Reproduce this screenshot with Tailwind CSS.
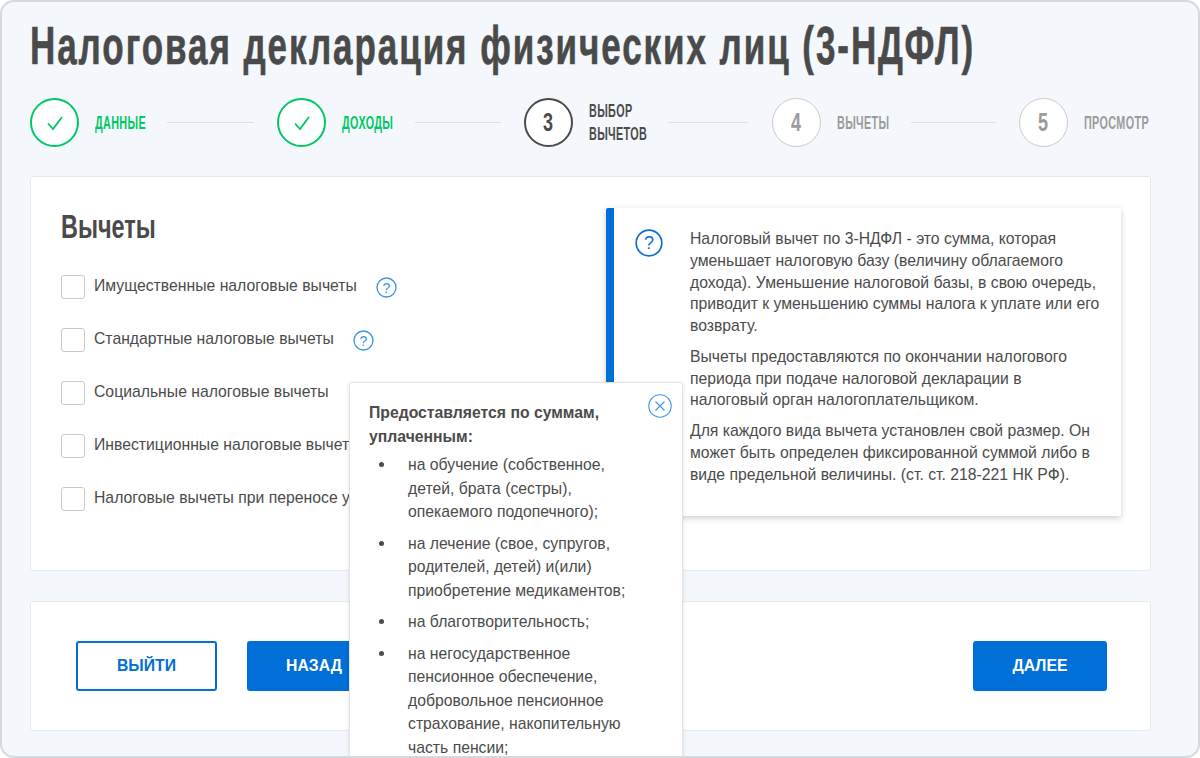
<!DOCTYPE html>
<html lang="ru">
<head>
<meta charset="utf-8">
<script src="https://cdn.jsdelivr.net/npm/@tailwindcss/browser@4"></script>
</head>
<body class="bg-white">
<div class="relative w-[1200px] h-[758px] overflow-hidden rounded-[14px] border-2 border-[#d3d9de] bg-[#f4f8fc] font-['Liberation_Sans',sans-serif] text-[#4b4b4b]">
  <div class="pl-[28px] pr-[47px]">
    <h1 class="mt-[12px] h-[62px] origin-left scale-x-[0.648] whitespace-nowrap text-[54px] leading-[62px] font-bold tracking-[3px] text-[#4a4a4a] [-webkit-text-stroke:0.6px_#4a4a4a]">Налоговая декларация физических лиц (3-НДФЛ)</h1>

    <div class="mt-[22px] flex h-[49px] items-center text-[18px] font-bold tracking-[0.6px]">
      <div class="flex w-[247px] items-center">
        <div class="flex h-[49px] w-[49px] shrink-0 items-center justify-center rounded-full border-2 border-[#00c864] bg-white">
          <svg class="h-[18px] w-[18px]" viewBox="0 0 18 18" fill="none" stroke="#00c864" stroke-width="1.8"><path d="M2 9.5l5 5.5L16 3"/></svg>
        </div>
        <span class="ml-4 w-[52px] origin-left scale-x-[0.6] whitespace-nowrap pt-[1px] text-[#00c864]">ДАННЫЕ</span>
        <div class="ml-5 mr-[23px] h-px flex-1 bg-[#d9dfe4]"></div>
      </div>
      <div class="flex w-[247px] items-center">
        <div class="flex h-[49px] w-[49px] shrink-0 items-center justify-center rounded-full border-2 border-[#00c864] bg-white">
          <svg class="h-[18px] w-[18px]" viewBox="0 0 18 18" fill="none" stroke="#00c864" stroke-width="1.8"><path d="M2 9.5l5 5.5L16 3"/></svg>
        </div>
        <span class="ml-4 w-[53px] origin-left scale-x-[0.6] whitespace-nowrap pt-[1px] text-[#00c864]">ДОХОДЫ</span>
        <div class="ml-5 mr-[23px] h-px flex-1 bg-[#d9dfe4]"></div>
      </div>
      <div class="flex w-[248px] items-center">
        <div class="flex h-[49px] w-[49px] shrink-0 items-center justify-center rounded-full border-2 border-[#4a4a4a] bg-white text-[25px]"><span class="scale-x-[0.72]">3</span></div>
        <span class="ml-4 w-[59px] origin-left scale-x-[0.6] whitespace-nowrap leading-[23px]">ВЫБОР<br>ВЫЧЕТОВ</span>
        <div class="ml-5 mr-[24px] h-px flex-1 bg-[#d9dfe4]"></div>
      </div>
      <div class="flex w-[247px] items-center text-[#9b9b9b]">
        <div class="flex h-[49px] w-[49px] shrink-0 items-center justify-center rounded-full border border-[#c9c9c9] bg-white text-[25px]"><span class="scale-x-[0.72]">4</span></div>
        <span class="ml-4 w-[54px] origin-left scale-x-[0.6] whitespace-nowrap pt-[1px]">ВЫЧЕТЫ</span>
        <div class="ml-5 mr-[23px] h-px flex-1 bg-[#d9dfe4]"></div>
      </div>
      <div class="flex items-center text-[#9b9b9b]">
        <div class="flex h-[49px] w-[49px] shrink-0 items-center justify-center rounded-full border border-[#c9c9c9] bg-white text-[25px]"><span class="scale-x-[0.72]">5</span></div>
        <span class="ml-4 w-[67px] origin-left scale-x-[0.6] whitespace-nowrap pt-[1px]">ПРОСМОТР</span>
      </div>
    </div>

    <section class="mt-[29px] flex h-[395px] rounded-[3px] border border-[#e6e9ec] bg-white pt-[30px] pl-[30px] pr-[29px]">
      <div class="w-[545px] shrink-0">
        <h2 class="mt-[1px] h-[38px] origin-left scale-x-[0.71] whitespace-nowrap text-[33px] leading-[38px] font-bold text-[#4a4a4a]">Вычеты</h2>
        <ul class="mt-[29px] flex flex-col gap-[29px] text-[15.75px] leading-[24px]">
          <li class="flex h-[24px] items-center whitespace-nowrap">
            <span class="h-[24px] w-[24px] shrink-0 rounded-[3px] border border-[#c9c9c9] bg-white"></span>
            <span class="ml-[9px] pb-[2px]">Имущественные налоговые вычеты</span>
            <svg class="ml-[19px] h-[21px] w-[21px]" viewBox="0 0 21 21" fill="none"><circle cx="10.5" cy="10.5" r="9.5" stroke="#3d94e6" stroke-width="1.3"/><text x="10.5" y="15.5" text-anchor="middle" font-size="14" font-family="Liberation Sans" fill="#3d94e6">?</text></svg>
          </li>
          <li class="flex h-[24px] items-center whitespace-nowrap">
            <span class="h-[24px] w-[24px] shrink-0 rounded-[3px] border border-[#c9c9c9] bg-white"></span>
            <span class="ml-[9px] pb-[2px]">Стандартные налоговые вычеты</span>
            <svg class="ml-[19px] h-[21px] w-[21px]" viewBox="0 0 21 21" fill="none"><circle cx="10.5" cy="10.5" r="9.5" stroke="#3d94e6" stroke-width="1.3"/><text x="10.5" y="15.5" text-anchor="middle" font-size="14" font-family="Liberation Sans" fill="#3d94e6">?</text></svg>
          </li>
          <li class="flex h-[24px] items-center whitespace-nowrap">
            <span class="h-[24px] w-[24px] shrink-0 rounded-[3px] border border-[#c9c9c9] bg-white"></span>
            <span class="ml-[9px] pb-[2px]">Социальные налоговые вычеты</span>
          </li>
          <li class="flex h-[24px] items-center whitespace-nowrap">
            <span class="h-[24px] w-[24px] shrink-0 rounded-[3px] border border-[#c9c9c9] bg-white"></span>
            <span class="ml-[9px] pb-[2px]">Инвестиционные налоговые вычеты</span>
          </li>
          <li class="flex h-[24px] items-center whitespace-nowrap">
            <span class="h-[24px] w-[24px] shrink-0 rounded-[3px] border border-[#c9c9c9] bg-white"></span>
            <span class="ml-[9px] pb-[2px]">Налоговые вычеты при переносе убытков</span>
          </li>
        </ul>
      </div>
      <aside class="mt-[1px] flex h-[308px] w-[515px] shrink-0 rounded-[2px] border-l-[8px] border-[#006fd8] bg-white pt-[20px] pl-[21px] pr-[20px] shadow-[0_2px_6px_rgba(0,0,0,0.2)]">
        <svg class="h-[28px] w-[28px] shrink-0 mt-[1px]" viewBox="0 0 28 28" fill="none"><circle cx="14" cy="14" r="12.8" stroke="#0a6fd6" stroke-width="1.7"/><text x="14" y="20" text-anchor="middle" font-size="18" font-family="Liberation Sans" fill="#0a6fd6">?</text></svg>
        <div class="ml-[27px] text-[15.75px] leading-[21.75px]">
          <p>Налоговый вычет по 3-НДФЛ - это сумма, которая уменьшает налоговую базу (величину облагаемого дохода). Уменьшение налоговой базы, в свою очередь, приводит к уменьшению суммы налога к уплате или его возврату.</p>
          <p class="mt-[9px]">Вычеты предоставляются по окончании налогового периода при подаче налоговой декларации в налоговый орган налогоплательщиком.</p>
          <p class="mt-[9px]">Для каждого вида вычета установлен свой размер. Он может быть определен фиксированной суммой либо в виде предельной величины. (ст. ст. 218-221 НК РФ).</p>
        </div>
      </aside>
    </section>

    <section class="mt-[30px] flex h-[130px] items-center justify-between rounded-[3px] border border-[#e6e9ec] bg-white pl-[45px] pr-[43px] text-[15.75px] font-bold">
      <div class="flex gap-[30px]">
        <button class="h-[50px] w-[141px] rounded-[3px] border-2 border-[#006fd8] bg-white text-[#006fd8]">ВЫЙТИ</button>
        <button class="h-[50px] w-[134px] rounded-[3px] bg-[#006fd8] text-white">НАЗАД</button>
      </div>
      <button class="h-[50px] w-[134px] rounded-[3px] bg-[#006fd8] text-white">ДАЛЕЕ</button>
    </section>
  </div>

  <div class="absolute left-[347px] top-[380px] h-[400px] w-[334px] rounded-[3px] border border-[#e3e3e3] bg-white pt-[18px] pl-[19px] pr-[40px] text-[15.75px] leading-[23.5px] shadow-[0_1px_4px_rgba(0,0,0,0.12)]">
    <svg class="absolute right-[10px] top-[11px] h-[24px] w-[24px]" viewBox="0 0 24 24" fill="none" stroke="#3d94e6"><circle cx="12" cy="12" r="11.2" stroke-width="1.1"/><path d="M7.5 7.5l9 9M16.5 7.5l-9 9" stroke-width="1.1"/></svg>
    <p class="font-bold">Предоставляется по суммам, уплаченным:</p>
    <ul class="mt-[5px] flex flex-col gap-[8px]">
      <li class="relative pl-[39px]"><span class="absolute left-[10px] top-[9px] h-[5px] w-[5px] rounded-full bg-[#4b4b4b]"></span>на обучение (собственное, детей, брата (сестры), опекаемого подопечного);</li>
      <li class="relative pl-[39px]"><span class="absolute left-[10px] top-[9px] h-[5px] w-[5px] rounded-full bg-[#4b4b4b]"></span>на лечение (свое, супругов, родителей, детей) и(или) приобретение медикаментов;</li>
      <li class="relative pl-[39px]"><span class="absolute left-[10px] top-[9px] h-[5px] w-[5px] rounded-full bg-[#4b4b4b]"></span>на благотворительность;</li>
      <li class="relative pl-[39px]"><span class="absolute left-[10px] top-[9px] h-[5px] w-[5px] rounded-full bg-[#4b4b4b]"></span>на негосударственное пенсионное обеспечение, добровольное пенсионное страхование, накопительную часть пенсии;</li>
    </ul>
  </div>
</div>
</body>
</html>
